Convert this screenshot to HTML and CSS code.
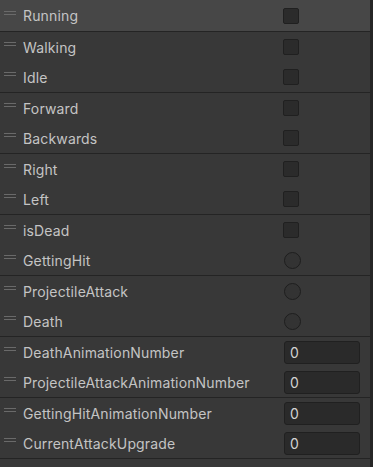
FILE: index.html
```html
<!DOCTYPE html>
<html lang="en">
<head>
    <meta charset="UTF-8">
    <title>Animator Parameters</title>
    <link rel="stylesheet" href="styles.css">
</head>
<body>
    <div class="panel">
        <div class="list">
            <!-- bool -->
            <div class="param first sep"><span class="handle"></span><span class="name">Running</span><span class="check"></span></div>
            <div class="param"><span class="handle"></span><span class="name">Walking</span><span class="check"></span></div>
            <div class="param sep"><span class="handle"></span><span class="name">Idle</span><span class="check"></span></div>
            <div class="param"><span class="handle"></span><span class="name">Forward</span><span class="check"></span></div>
            <div class="param sep"><span class="handle"></span><span class="name">Backwards</span><span class="check"></span></div>
            <div class="param"><span class="handle"></span><span class="name">Right</span><span class="check"></span></div>
            <div class="param sep"><span class="handle"></span><span class="name">Left</span><span class="check"></span></div>
            <div class="param"><span class="handle"></span><span class="name">isDead</span><span class="check"></span></div>
            <!-- trigger -->
            <div class="param sep"><span class="handle"></span><span class="name">GettingHit</span><span class="radio"></span></div>
            <div class="param"><span class="handle"></span><span class="name">ProjectileAttack</span><span class="radio"></span></div>
            <div class="param sep"><span class="handle"></span><span class="name">Death</span><span class="radio"></span></div>
            <!-- int -->
            <div class="param"><span class="handle"></span><span class="name">DeathAnimationNumber</span><span class="field">0</span></div>
            <div class="param sep"><span class="handle"></span><span class="name">ProjectileAttackAnimationNumber</span><span class="field">0</span></div>
            <div class="param"><span class="handle"></span><span class="name">GettingHitAnimationNumber</span><span class="field">0</span></div>
            <div class="param sep"><span class="handle"></span><span class="name">CurrentAttackUpgrade</span><span class="field">0</span></div>
        </div>
        <div class="scroll"></div>
    </div>
</body>
</html>
```
FILE: styles.css
```css
*{
    box-sizing: border-box;
    margin: 0;
    padding: 0;
}
body{
    background-color: #383838;
    font-family: Inter, "Noto Sans", sans-serif;
    font-size: 14px;
    letter-spacing: 0.15px;
    color: #c4c4c4;
}
.panel{
    display: flex;
    width: 373px;
    height: 467px;
    overflow: hidden;
}
.list{
    flex: 1;
}
.scroll{
    width: 3px;
    background-color: #262626;
}
.param{
    height: 30px;
    display: flex;
    align-items: center;
    background-color: #383838;
}
.param.sep{
    height: 31px;
    border-bottom: 1px solid #242424;
}
.param.first{
    height: 32px;
    background-color: #474747;
}
.handle{
    width: 12px;
    height: 4px;
    margin: 0 7px 6px 4px;
    border-top: 1px solid #6a6a6a;
    border-bottom: 1px solid #6a6a6a;
}
.name{
    flex: 1;
    white-space: nowrap;
}
.check{
    width: 16px;
    height: 16px;
    margin-right: 71px;
    background-color: #2b2b2b;
    border: 1px solid #202020;
    border-radius: 2px;
}
.radio{
    width: 17px;
    height: 17px;
    margin-right: 69px;
    background-color: #333;
    border: 1px solid #1e1e1e;
    border-radius: 50%;
}
.field{
    width: 76px;
    height: 23px;
    margin-right: 10px;
    padding: 2px 5px 0;
    background-color: #2a2a2a;
    border: 1px solid #202020;
    border-radius: 3px;
    color: #d2d2d2;
}
```
